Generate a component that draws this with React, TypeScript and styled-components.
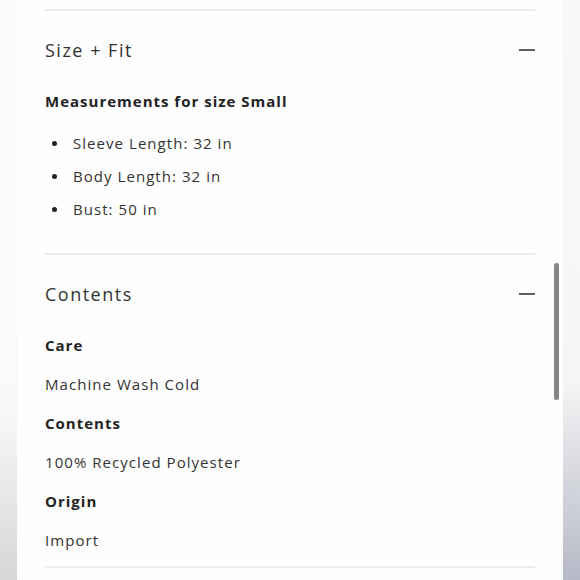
import React from 'react';
import styled, { createGlobalStyle } from 'styled-components';

const GlobalStyle = createGlobalStyle`
  html, body {
    margin: 0;
    padding: 0;
    background: #ffffff;
  }
  * {
    box-sizing: border-box;
  }
`;

const sizeItems = ['Sleeve Length: 32 in', 'Body Length: 32 in', 'Bust: 50 in'];

const contentRows = [
  { label: 'Care', value: 'Machine Wash Cold' },
  { label: 'Contents', value: '100% Recycled Polyester' },
  { label: 'Origin', value: 'Import' }
];

const Minus = () => (
  <MinusIcon width="16" height="2" viewBox="0 0 16 2">
    <rect x="0" y="0" width="16" height="2" fill="#5f5f5f" />
  </MinusIcon>
);

const App = () => {
  return (
    <Page>
      <GlobalStyle />
      <Gutter side="left" />
      <Panel>
        <Section>
          <Header>
            <HeaderTitle>Size + Fit</HeaderTitle>
            <Minus />
          </Header>
          <SubHeading>Measurements for size Small</SubHeading>
          <List>
            {sizeItems.map((item) => (
              <ListItem key={item}>
                <Bullet />
                <Text>{item}</Text>
              </ListItem>
            ))}
          </List>
        </Section>
        <Section last>
          <Header>
            <HeaderTitle>Contents</HeaderTitle>
            <Minus />
          </Header>
          <Rows>
            {contentRows.map((row) => (
              <React.Fragment key={row.label}>
                <SubHeading>{row.label}</SubHeading>
                <Text>{row.value}</Text>
              </React.Fragment>
            ))}
          </Rows>
        </Section>
        <Divider />
        <ScrollThumb />
      </Panel>
      <Gutter side="right" />
    </Page>
  );
};

const Page = styled.div`
  width: 580px;
  height: 580px;
  display: flex;
  overflow: hidden;
  font-family: 'Open Sans', 'Liberation Sans', sans-serif;
  color: #2b2b2b;
`;

const Gutter = styled.div<{ side: 'left' | 'right' }>`
  width: 17px;
  flex-shrink: 0;
  background: ${({ side }) =>
    side === 'left'
      ? 'linear-gradient(180deg, #fbfbfb 0%, #f9f9f9 70%, #d6d6d6 100%)'
      : 'linear-gradient(180deg, #f8f8f8 0%, #f6f6f6 65%, #b6b9c6 100%)'};
`;

const Panel = styled.div`
  position: relative;
  width: 546px;
  flex-shrink: 0;
  background: #fefefe;
  padding: 9px 28px 0;
`;

const Section = styled.section<{ last?: boolean }>`
  border-top: 2px solid #ebebea;
  padding-bottom: ${({ last }) => (last ? '14px' : '32px')};
`;

const Header = styled.div`
  height: 78px;
  display: flex;
  align-items: center;
  justify-content: space-between;
`;

const HeaderTitle = styled.h3`
  margin: 0;
  font-size: 18px;
  font-weight: 400;
  letter-spacing: 1.5px;
  color: #333333;
`;

const MinusIcon = styled.svg`
  display: block;
`;

const SubHeading = styled.div`
  font-size: 15px;
  line-height: 24px;
  font-weight: 700;
  letter-spacing: 1px;
  color: #222222;
`;

const Text = styled.div`
  font-size: 15px;
  line-height: 24px;
  letter-spacing: 1.05px;
  color: #333333;
`;

const List = styled.ul`
  list-style: none;
  margin: 18px 0 0;
  padding: 0;
  display: flex;
  flex-direction: column;
  gap: 9px;
`;

const ListItem = styled.li`
  display: flex;
  align-items: center;
  gap: 16px;
`;

const Bullet = styled.span`
  width: 5px;
  height: 5px;
  margin-left: 7px;
  border-radius: 50%;
  background: #222222;
  flex-shrink: 0;
`;

const Rows = styled.div`
  display: flex;
  flex-direction: column;
  gap: 15px;
`;

const Divider = styled.div`
  border-top: 2px solid #ebebea;
`;

const ScrollThumb = styled.div`
  position: absolute;
  left: 537px;
  top: 263px;
  width: 5px;
  height: 137px;
  border-radius: 3px;
  background: #868686;
`;

export default App;
